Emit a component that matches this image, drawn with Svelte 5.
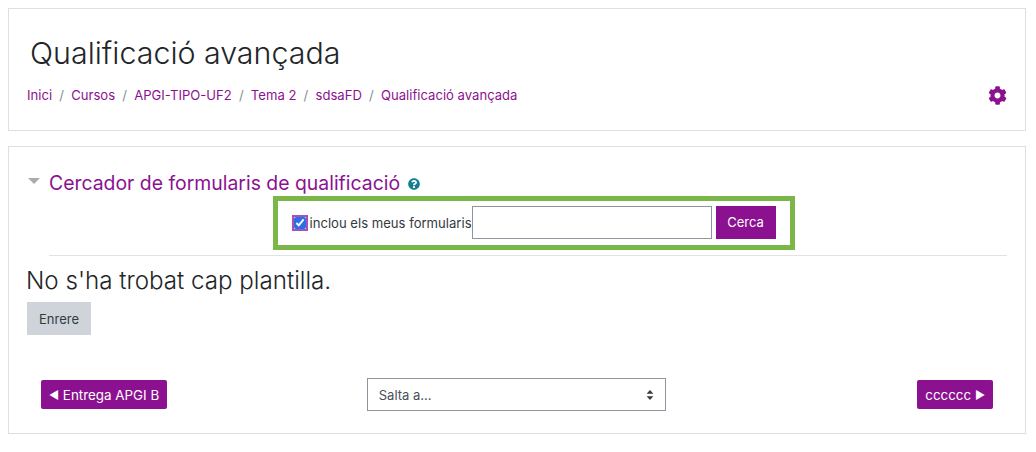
<script>
    let includeMine = true;
</script>

<div class="page">
    <header class="card head">
        <h1>Qualificació avançada</h1>
        <div class="crumbs">
            <nav>
                <a href="#a">Inici</a><span>/</span>
                <a href="#a">Cursos</a><span>/</span>
                <a href="#a">APGI-TIPO-UF2</a><span>/</span>
                <a href="#a">Tema 2</a><span>/</span>
                <a href="#a">sdsaFD</a><span>/</span>
                <a href="#a">Qualificació avançada</a>
            </nav>
            <svg class="gear" viewBox="0 0 512 512" width="19" height="19">
                <path fill="#8c1190" d="M487 316l-42-25c4-23 4-47 0-70l42-25c5-3 7-8 6-14-11-35-30-67-55-94-4-4-10-5-15-2l-42 25c-18-15-38-27-61-35V27c0-6-4-11-9-12-36-8-73-8-107 0-6 1-10 6-10 12v49c-22 8-43 20-60 35L92 86c-5-3-11-2-15 2-25 27-44 59-55 94-2 6 0 11 6 14l42 25c-4 23-4 47 0 70l-42 25c-5 3-8 8-6 14 11 35 30 67 55 94 4 4 10 5 15 2l42-25c18 15 38 27 61 35v49c0 6 4 11 10 12 36 8 73 8 107 0 5-1 9-6 9-12v-49c23-8 43-20 61-35l42 25c5 3 11 2 15-2 25-27 44-59 55-94 1-6-1-11-6-14zM256 336c-44 0-80-36-80-80s36-80 80-80 80 36 80 80-36 80-80 80z"/>
            </svg>
        </div>
    </header>

    <main class="card body">
        <div class="legend">
            <span class="caret"></span>
            <h2>Cercador de formularis de qualificació</h2>
            <svg class="help" viewBox="0 0 512 512" width="12" height="12">
                <path fill="#117f90" d="M504 256c0 137-111 248-248 248S8 393 8 256 119 8 256 8s248 111 248 248zM263 90c-54 0-89 23-116 63-4 5-3 12 2 16l35 26c5 4 13 3 17-2 18-23 30-36 58-36 21 0 46 13 46 33 0 15-12 23-33 34-24 14-55 31-55 73v4c0 7 5 12 12 12h56c7 0 12-5 12-12v-1c0-29 85-30 85-109 0-59-61-101-119-101zm-7 252c-26 0-47 21-47 47s21 47 47 47 47-21 47-47-21-47-47-47z"/>
            </svg>
        </div>

        <form class="search" on:submit|preventDefault>
            <div class="search-box">
                <input class="check" type="checkbox" bind:checked={includeMine} />
                <label for="q">inclou els meus formularis</label>
                <input id="q" class="query" type="text" />
                <button class="btn primary search-btn" type="submit">Cerca</button>
            </div>
        </form>

        <hr />

        <p class="empty">No s'ha trobat cap plantilla.</p>
        <button class="btn back" type="button">Enrere</button>

        <div class="activity-nav">
            <a class="btn primary link" href="#a"><span class="arrow">◄</span> Entrega APGI B</a>
            <div class="jump">
                <span>Salta a...</span>
                <svg viewBox="0 0 8 12" width="8" height="12">
                    <path fill="#373a3c" d="M4 1 7.4 4.8H.6zM4 11 .6 7.2h6.8z"/>
                </svg>
            </div>
            <a class="btn primary link" href="#a">cccccc <span class="arrow">►</span></a>
        </div>
    </main>
</div>

<style>
    :global(body) {
        margin: 0;
        background: #fff;
        font-family: Inter, "Liberation Sans", sans-serif;
        color: #343a40;
    }

    .page {
        padding: 8px 10px 0 8px;
        display: flex;
        flex-direction: column;
        gap: 15px;
    }

    .card {
        border: 1px solid #dfdfdf;
    }

    .head {
        height: 121px;
        padding: 0 18px;
        display: flex;
        flex-direction: column;
    }

    h1 {
        margin: 27px 0 0 3px;
        font-size: 30.4px;
        line-height: 34px;
        font-weight: 300;
        color: #212529;
    }

    .crumbs {
        margin-top: 15px;
        display: flex;
        justify-content: space-between;
        align-items: center;
        height: 20px;
    }

    nav {
        display: flex;
        font-size: 13.1px;
        gap: 7.2px;
    }

    nav a {
        color: #8c1190;
        text-decoration: none;
    }

    nav span {
        color: #868e96;
    }

    .body {
        height: 286px;
        padding: 0 18px;
        display: flex;
        flex-direction: column;
    }

    .legend {
        margin-top: 23px;
        display: flex;
        align-items: center;
        height: 26px;
    }

    .caret {
        width: 0;
        height: 0;
        border-left: 6px solid transparent;
        border-right: 6px solid transparent;
        border-top: 6px solid #aaa;
        margin: -4px 9px 0 1px;
    }

    h2 {
        margin: 0;
        font-size: 19.4px;
        font-weight: 400;
        color: #8c1190;
    }

    .help {
        margin: 2px 0 0 8px;
    }

    .search {
        display: flex;
        justify-content: center;
    }

    .search-box {
        box-sizing: border-box;
        width: 522px;
        height: 54px;
        margin-left: 33px;
        border: 5px solid #7ab648;
        display: flex;
        align-items: center;
        padding: 0 0 2px 14px;
        font-size: 13.1px;
    }

    .check {
        box-sizing: border-box;
        width: 12px;
        height: 12px;
        margin: 2px 4px 0 2px;
        accent-color: #2a6fe8;
        outline: 2px solid #a653b8;
        outline-offset: 0;
    }

    label {
        margin-top: 2px;
    }

    .query {
        box-sizing: border-box;
        width: 240px;
        height: 33px;
        border: 1px solid #8f959e;
        border-radius: 0;
        margin: 0 4px 0 0;
        padding: 0 8px;
    }

    .btn {
        font-family: inherit;
        font-size: 13px;
        border: 0;
        display: inline-flex;
        align-items: center;
        justify-content: center;
        box-sizing: border-box;
        text-decoration: none;
    }

    .primary {
        background: #8c1190;
        color: #fff;
    }

    .search-btn {
        width: 60px;
        height: 33px;
    }

    hr {
        width: 958px;
        margin: 5px 0 0 22px;
        border: 0;
        border-top: 1px solid #e2e2e6;
    }

    .empty {
        margin: 10px 0 0 -1px;
        font-size: 24.15px;
        line-height: 30px;
        font-weight: 300;
        color: #212529;
    }

    .back {
        margin-top: 6px;
        width: 64px;
        height: 33px;
        background: #ced4da;
        color: #343a40;
        align-self: flex-start;
    }

    .activity-nav {
        margin-top: 43px;
        padding: 0 14px;
        display: flex;
        justify-content: space-between;
        align-items: center;
    }

    .link {
        height: 29px;
        padding: 0 8px;
        border-radius: 2px;
        white-space: pre;
        font-size: 13.4px;
    }

    .arrow {
        font-size: 11px;
    }

    .jump {
        box-sizing: border-box;
        width: 299px;
        height: 33px;
        margin-right: 52px;
        border: 1px solid #8f959e;
        padding: 0 11px 0 11px;
        display: flex;
        justify-content: space-between;
        align-items: center;
        font-size: 13px;
        color: #495057;
    }
</style>
